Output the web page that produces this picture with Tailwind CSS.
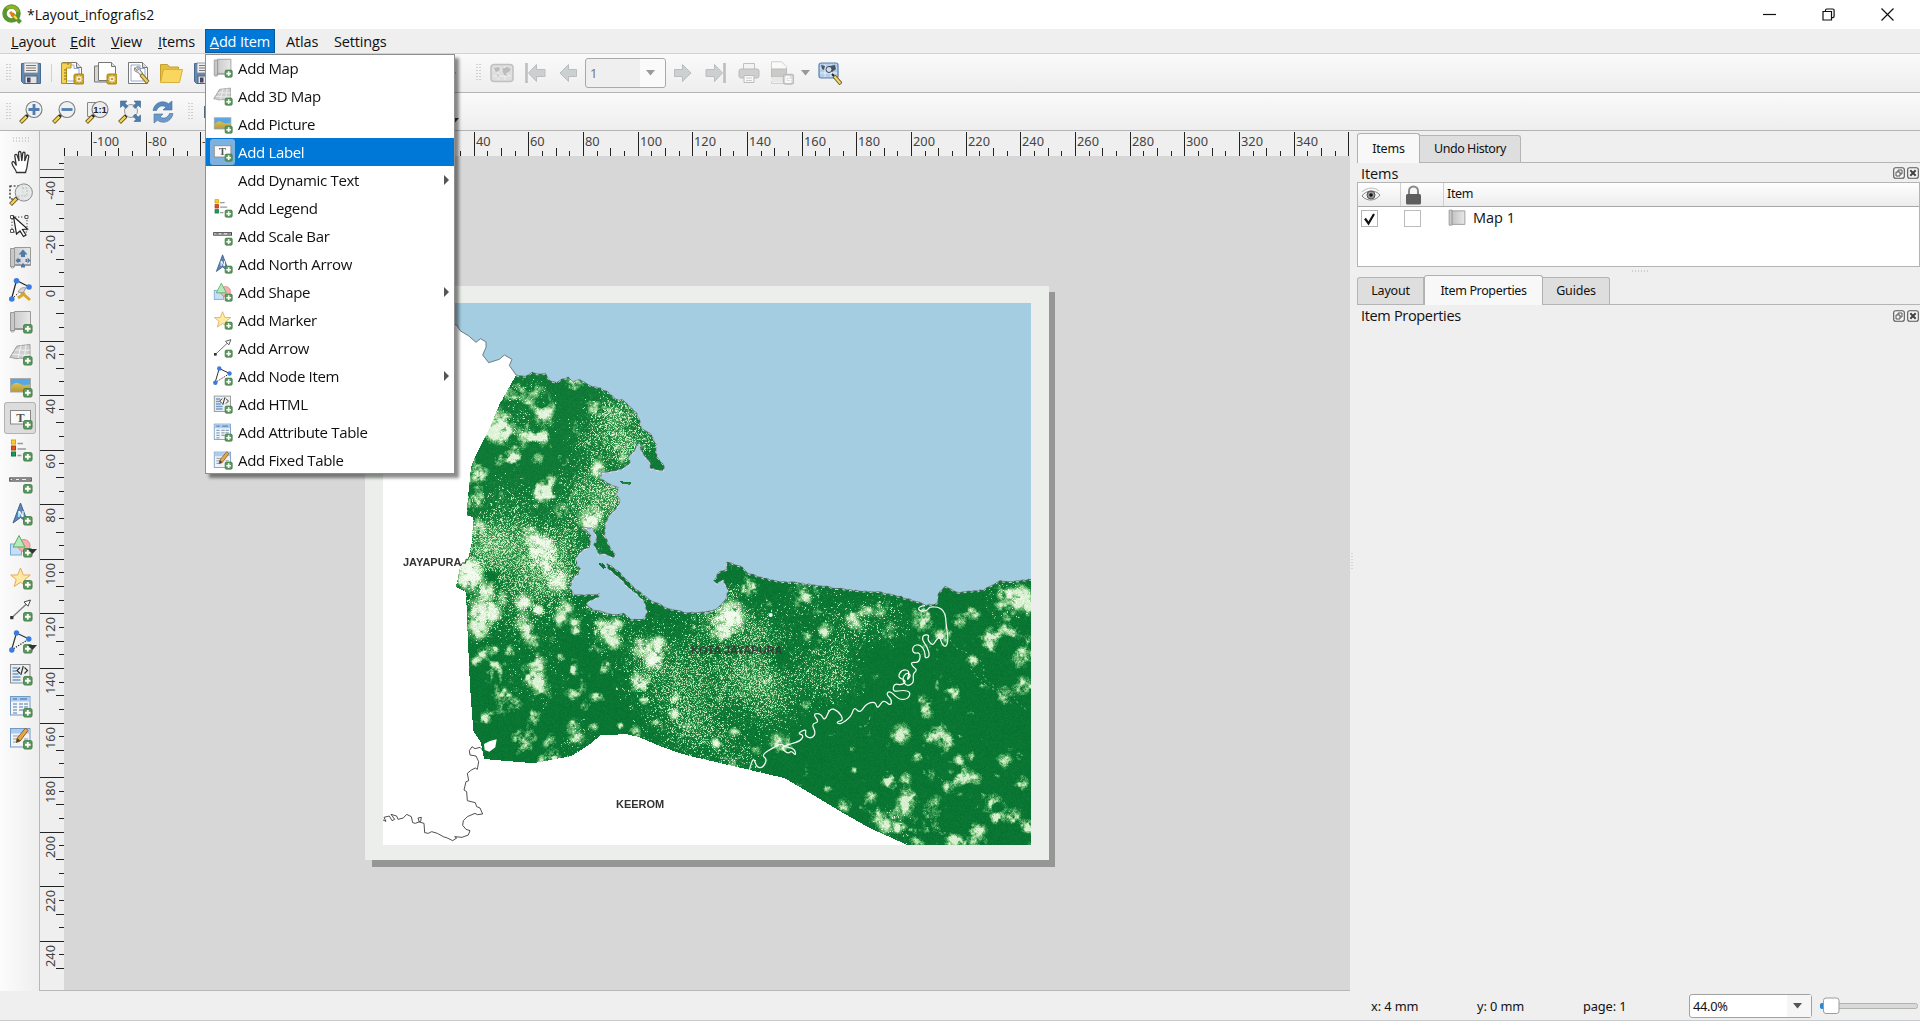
<!DOCTYPE html>
<html lang="en">
<head>
<meta charset="utf-8">
<title>Layout_infografis2</title>
<script src="https://cdn.jsdelivr.net/npm/@tailwindcss/browser@4"></script>
</head>
<body class="w-[1920px] h-[1021px] overflow-hidden bg-[#efefef] font-['Open_Sans',sans-serif] text-[15px] text-[#111] leading-none flex flex-col relative">

<svg class="absolute w-0 h-0">
  <defs>
    <linearGradient id="roll" x1="0" x2="1" y1="0" y2="0"><stop offset="0" stop-color="#c4c4c4"/><stop offset="1" stop-color="#e8e8e8"/></linearGradient>
    <linearGradient id="sand" x1="0" x2="0" y1="0" y2="1"><stop offset="0" stop-color="#dcc05a"/><stop offset="1" stop-color="#b99b35"/></linearGradient>
    <g id="plus"><rect x="14.500" y="14.500" width="8.600" height="8.600" rx="1.600" fill="#5b965c" stroke="#3f7a45" stroke-width=".8"/><path d="M18.800 16v5.600M16 18.800h5.600" stroke="#fff" stroke-width="1.900"/></g>
    <g id="sheet"><path d="M1.500 2.500h4v18h-4zM5.500 1.500h16v18h-16z" fill="url(#roll)" stroke="#999" stroke-width="1"/><path d="M1.500 20.500c0 2 4 2 4 0v-2H21" fill="none" stroke="#999"/></g>
    <g id="star-new"><rect x="14" y="13" width="10" height="10" rx="1.500" fill="#c9a227" stroke="#a98613"/><path d="M19 14.500v7M15.500 18h7M16.500 15.500l5 5M21.500 15.500l-5 5" stroke="#fff" stroke-width="1.100"/><circle cx="19" cy="18" r="1.300" fill="#c9a227"/></g>
    <g id="page"><path d="M2.500 1.500h14l5 5v16h-19z" fill="#fff" stroke="#777"/><path d="M16.500 1.500v5h5" fill="#ddd" stroke="#777"/><path d="M5 4h9v3.500h5V20H5z" fill="none" stroke="#8c9fca" stroke-width=".9"/></g>
    <g id="lens"><path d="M1.500 22.500l6.500-6.500" stroke="#6e5a15" stroke-width="4"/><path d="M2 22l5.500-5.500" stroke="#f0d45c" stroke-width="2.400"/><path d="M7.500 16.500l3-3" stroke="#222" stroke-width="2.800"/></g>
  </defs>
  <symbol id="save" viewBox="0 0 24 24"><path d="M2.500 2.500h19v20H4.500l-2-2z" fill="#6089b5" stroke="#456a94"/><rect x="5" y="2" width="14" height="10" fill="#eee" stroke="#888" stroke-width=".8"/><path d="M7 4.500h10M7 7h10M7 9.500h10" stroke="#777" stroke-width="1.200"/><rect x="6" y="15" width="12" height="7.500" fill="#e4e4e4" stroke="#567"/><rect x="8" y="16.500" width="3.500" height="5" fill="#446"/></symbol>
  <symbol id="new-layout" viewBox="0 0 24 24"><use href="#page"/><path d="M1.500 2v20.500h5V7H11V2z" fill="#f2d354" stroke="#b48f18"/><path d="M4 9h2.500M4 12h2.500M4 15h2.500M4 18h2.500M8 2v2" stroke="#8a6c10"/><use href="#star-new"/></symbol>
  <symbol id="dup" viewBox="0 0 24 24"><path d="M1.500 5v16h15V5z" fill="#d5d5d5" stroke="#777"/><path d="M5.500 1.500h13l4 4v14h-17z" fill="#fff" stroke="#777"/><path d="M18.500 1.500v4h4" fill="#ddd" stroke="#777"/><use href="#star-new"/></symbol>
  <symbol id="manager" viewBox="0 0 24 24"><use href="#page"/><path d="M9 6.500c-1.500 2 0 4.500 2.500 4.500l3 3 2-2-2.500-3c.5-2.500-2-4-3.500-3l2 2-1.500 1.700z" fill="#e8e8e8" stroke="#666" stroke-width=".9"/><path d="M15 13.500l7 8" stroke="#7c6a22" stroke-width="4.200"/><path d="M15.500 14l6 7" stroke="#e8cf62" stroke-width="2.500"/></symbol>
  <symbol id="folder" viewBox="0 0 24 24"><path d="M1.500 21V3.500h7l2 2.500h9v3" fill="#e3bf45" stroke="#c7a02c"/><path d="M1.500 21.500L4.500 8.500h19l-3 13z" fill="#f9d75e" stroke="#d7b13a"/></symbol>
  <symbol id="zin" viewBox="0 0 24 24"><use href="#lens"/><circle cx="15" cy="9.500" r="8" fill="#eef0f2" stroke="#7a7a7a" stroke-width="1.100"/><path d="M15 4v11M9.500 9.500h11" stroke="#4f7db0" stroke-width="2.800"/></symbol>
  <symbol id="zout" viewBox="0 0 24 24"><use href="#lens"/><circle cx="15" cy="9.500" r="8" fill="#eef0f2" stroke="#7a7a7a" stroke-width="1.100"/><path d="M9.500 9.500h11" stroke="#4f7db0" stroke-width="2.800"/></symbol>
  <symbol id="z11" viewBox="0 0 24 24"><path d="M2.500 2.500h10v14h-10z" fill="#eee" stroke="#888"/><use href="#lens"/><circle cx="15" cy="9.500" r="8" fill="#ececec" stroke="#7a7a7a" stroke-width="1.100"/><text x="15" y="13" text-anchor="middle" font-family="Liberation Sans" font-weight="bold" font-size="9.500" fill="#222">1:1</text></symbol>
  <symbol id="zfull" viewBox="0 0 24 24"><use href="#lens"/><circle cx="13" cy="11" r="6.500" fill="#eee" stroke="#999"/><g fill="#4d7cb0" stroke="#3a628f" stroke-width=".6"><path d="M2.500 1h6.500L7 3.200l3 3-2.200 2.200-3-3L2.500 7.500zM22.500 1H16l2 2.200-3 3 2.200 2.200 3-3 2.300 2.100zM22.500 21.500H16l2-2.200-3-3 2.200-2.200 3 3 2.300-2.100z"/></g></symbol>
  <symbol id="refresh" viewBox="0 0 24 24"><path d="M2 10.500C3 4 9 0 15.500 2.500l2 1.200L21 1v9h-9l3-3C11 4.500 7 6.500 5.500 10.500z" fill="#5b89bd" stroke="#456f9f" stroke-width=".6"/><path d="M22 13.500C21 20 15 24 8.500 21.500l-2-1.200L3 23v-9h9l-3 3c4 2.500 8 .5 9.500-3.500z" fill="#6d9acb" stroke="#456f9f" stroke-width=".6"/></symbol>
  <symbol id="atlas" viewBox="0 0 24 24"><rect x="1" y="3.500" width="22" height="17" rx="3" fill="#dedede" stroke="#c0c0c0" stroke-width="1.500"/><path d="M3 9h18M3 15h18M8 5v14M15 5v14" stroke="#f5f5f5" stroke-width=".8"/><path d="M4 7l5-1 1 3-3 2-2-1zM12 8l5-2 4 2-2 3-3 1 1 3-3-1zM7 13l2 1-1 3z" fill="#bcbcbc"/></symbol>
  <symbol id="first" viewBox="0 0 24 24"><path d="M3.500 2v20" stroke="#bcbfbf" stroke-width="2.600"/><path d="M5.500 12l8-8.500V8.500H22v7h-8.500v5z" fill="#cdd0d0" stroke="#bbbebe"/></symbol>
  <symbol id="prev" viewBox="0 0 24 24"><path d="M4 12l8.500-8.500V8.500H20.500v7h-8v5z" fill="#cdd0d0" stroke="#bbbebe"/></symbol>
  <symbol id="next" viewBox="0 0 24 24"><path d="M20 12l-8.500-8.500V8.500H3.500v7h8v5z" fill="#cdd0d0" stroke="#bbbebe"/></symbol>
  <symbol id="last" viewBox="0 0 24 24"><path d="M20.500 2v20" stroke="#bcbfbf" stroke-width="2.600"/><path d="M18.500 12l-8-8.500V8.500H2v7h8.500v5z" fill="#cdd0d0" stroke="#bbbebe"/></symbol>
  <symbol id="print" viewBox="0 0 24 24"><path d="M6.500 2.500h11V9h-11z" fill="#f3f3f3" stroke="#c0c0c0"/><rect x="2" y="8" width="20" height="9" rx="2" fill="#cfcfcf" stroke="#bababa"/><path d="M7 14.500h10v7H7z" fill="#f8f8f8" stroke="#bbb"/><path d="M9 17h6M9 19.500h6" stroke="#ccc"/></symbol>
  <symbol id="export" viewBox="0 0 24 24"><path d="M1.500 8V.800h10l5 5V8" fill="#fafafa" stroke="#cfcfcf"/><path d="M1.500 20v2.500h12" fill="none" stroke="#cfcfcf"/><rect x="1.500" y="8" width="15" height="8" fill="#c9cbc8" stroke="#bcbcbc"/><rect x="1.500" y="16" width="15" height="5" fill="#e8e8e8"/><rect x="13.500" y="13.500" width="10" height="9.500" rx="2" fill="#ddd" stroke="#bcbcbc" stroke-width="1.400"/><path d="M16 16v5h4.500v-1.500M16 16h4M17.500 18.300h4" stroke="#fff" stroke-width="1.300" fill="none"/></symbol>
  <symbol id="atlas-set" viewBox="0 0 24 24"><rect x="1" y="2" width="19" height="15" rx="2" fill="#b4cdea" stroke="#5a80ae" stroke-width="1.200"/><path d="M2 7h17M2 12h17M7 3v13M13 3v13" stroke="#eef4fb" stroke-width=".9"/><path d="M3 4l4 1-1 4-2-1zM11 5l6-1 1 4-4 3-3-2z" fill="#4a5563"/><circle cx="11" cy="8.500" r="3" fill="#cfe0f2" stroke="#445"/><path d="M14 13l2 2" stroke="#222" stroke-width="2"/><path d="M16 15l7 8" stroke="#6e5a15" stroke-width="4"/><path d="M16.500 15.500l6 7" stroke="#ecd878" stroke-width="2.200"/></symbol>

  <symbol id="hand" viewBox="0 0 24 24"><path d="M7.500 22.500c-.5-3-4-6-4.500-9-.3-2 1.500-2.500 2.500-1l1.800 3L5.800 6c-.3-2 2-2.300 2.500-.5L10 11 9.500 3c0-2 2.300-2 2.500 0l.8 8 .9-7.500c.2-1.800 2.400-1.600 2.300.2L15.700 11l1.800-5c.6-1.700 2.600-1 2.200.8-.8 4-1.200 7-1.700 10.200-.3 2-1 3.500-1.500 5.500z" fill="#fff" stroke="#333" stroke-width="1.300"/></symbol>
  <symbol id="zoom" viewBox="0 0 24 24"><rect x="1" y="4" width="13" height="13" fill="none" stroke="#111" stroke-width="1.200" stroke-dasharray="2 1.600"/><use href="#lens"/><circle cx="14.800" cy="10.500" r="8.600" fill="#e4e6e6" fill-opacity=".93" stroke="#8a8a8a"/><path d="M13 6h5v8h-6" fill="none" stroke="#bbb" stroke-dasharray="2 1.500"/></symbol>
  <symbol id="select" viewBox="0 0 24 24"><rect x="3" y="3" width="15" height="15" fill="none" stroke="#444" stroke-dasharray="1.300 1.700"/><path d="M1.500 1.500h3v3h-3zM16 1.500h3v3h-3zM1.500 15.500h3v3h-3z" fill="#fff" stroke="#555"/><path d="M4.500 2.500L18.500 15l-5 .5 3.500 5.500-2.500 1.500-3.500-5.500-3.500 3z" fill="#fff" stroke="#222" stroke-width="1.200"/></symbol>
  <symbol id="movec" viewBox="0 0 24 24"><use href="#sheet"/><g fill="#4d7aa8"><path d="M14 3.500l4.500 5H16V11h-4V8.500H9.500zM12 19h4v2.500h-4zM6.500 14.500l3-3v6zM21.500 14.500l-3-3v6zM9 13h2.500v3H9zM16.500 13H19v3h-2.500zM13 17.500h2V20h-2z"/></g></symbol>
  <symbol id="nodes-edit" viewBox="0 0 24 24"><path d="M7.500 2.500L2.500 21M7.500 2.500L20.500 9" stroke="#222" stroke-width="1.200"/><path d="M2.500 21l7-6" stroke="#222" stroke-dasharray="1.500 1.500"/><path d="M9 20l7-5M12 14l9 8" stroke="#d8a72a" stroke-width="3"/><path d="M9 14c2-4 5-5 8-4l-3 5z" fill="#d4d4d4" stroke="#888" stroke-width=".8"/><g fill="#3b7be0"><circle cx="7.500" cy="2.800" r="2.800"/><circle cx="20" cy="9" r="2.800"/><circle cx="2.800" cy="21" r="2.800"/></g></symbol>

  <symbol id="map" viewBox="0 0 24 24"><use href="#sheet"/><use href="#plus"/></symbol>
  <symbol id="map0" viewBox="0 0 24 24"><path d="M1.500 1.500h4v20h-4z" fill="#ccc" stroke="#999" stroke-width="1.200"/><path d="M5.500 2.500h17v18h-17z" fill="url(#roll)" stroke="#999" stroke-width="1.200"/></symbol>
  <symbol id="map3d" viewBox="0 0 24 24"><path d="M8 4l13-1.500V17c-4 2-8-2-12-.5-3 1-5-1.500-8-1z" fill="#cfcfcf" stroke="#a0a0a0"/><path d="M5 8.500c5-2 10 1 16-.5M3 12.500c6-1 10 2 18 0M12 3.500L9 16M17 3l-2 14" stroke="#f2f2f2" fill="none"/><path d="M8 4L1 15.500" stroke="#aaa"/><use href="#plus"/></symbol>
  <symbol id="pic" viewBox="0 0 24 24"><rect x="1.500" y="4.500" width="20" height="13.500" fill="#55a8e4" stroke="#aaa"/><path d="M2 12c4-4 6-4 9-2 3 1.500 6 1 10 .5v7H2z" fill="url(#sand)"/><use href="#plus"/></symbol>
  <symbol id="label" viewBox="0 0 24 24"><rect x="1.500" y="4.500" width="20" height="13.500" fill="#fafafa" stroke="#888"/><text x="11.500" y="15.500" text-anchor="middle" font-family="Liberation Serif" font-weight="bold" font-size="12.500" fill="#555">T</text><use href="#plus"/></symbol>
  <symbol id="legend" viewBox="0 0 24 24"><rect x="2.500" y="2" width="4" height="4" fill="#fbd02c" stroke="#d9a400"/><rect x="2.500" y="8" width="4" height="4" fill="#e0521c" stroke="#b8380c"/><rect x="2.500" y="14" width="4" height="4" fill="#16a05a" stroke="#0c7a40"/><path d="M8.500 5.500H14M8.500 11h8.500M8.500 17.500h4" stroke="#999" stroke-width="1.500"/><use href="#plus"/></symbol>
  <symbol id="scale" viewBox="0 0 24 24"><rect x=".8" y="8" width="21.400" height="3" fill="#eee" stroke="#444" stroke-width="1.200"/><path d="M3 9.500h4M10 9.500h3M17 9.500h4" stroke="#888" stroke-width="2"/><use href="#plus"/></symbol>
  <symbol id="north" viewBox="0 0 24 24"><path d="M11.500 1L4 21l7.500-5.500L19 21z" fill="#5f87b3" stroke="#3c638f"/><text x="11.800" y="14.500" text-anchor="middle" font-family="Liberation Sans" font-weight="bold" font-size="8.500" fill="#fff">N</text><use href="#plus"/></symbol>
  <symbol id="shape" viewBox="0 0 24 24"><rect x="1.500" y="10" width="11" height="11" fill="#c3e0f6" stroke="#7ba9d6"/><circle cx="15" cy="11.500" r="6" fill="#f6b0ad" stroke="#e08886"/><path d="M10 1.500l6 11.500H4z" fill="#b4ebb9" stroke="#57ab66"/><use href="#plus"/></symbol>
  <symbol id="marker" viewBox="0 0 24 24"><path d="M11.500 2l2.800 7h7l-5.500 4.500 2 7-6.300-4.200-6.300 4.200 2-7L1.700 9h7z" fill="#fdeaa4" stroke="#e8a85e"/><use href="#plus"/></symbol>
  <symbol id="arrow" viewBox="0 0 24 24"><path d="M3 19.500L18.500 5" stroke="#777" stroke-width="1.200"/><rect x="1.200" y="18" width="3.200" height="3.200" fill="#333"/><path d="M21.500 2l-6.500 2 4 4.200z" fill="#fff" stroke="#444"/><use href="#plus"/></symbol>
  <symbol id="node" viewBox="0 0 24 24"><path d="M7.500 3L2.500 20M7.500 3l12.500 6" stroke="#333" stroke-width="1.200"/><path d="M2.500 20L20 9" stroke="#222" stroke-width="1.200" stroke-dasharray="1.300 1.300"/><g fill="#3b7be0"><circle cx="7.500" cy="3" r="2.700"/><circle cx="19.800" cy="9" r="2.700"/><circle cx="2.800" cy="20" r="2.700"/></g><use href="#plus"/></symbol>
  <symbol id="html" viewBox="0 0 24 24"><rect x="1.500" y="2.500" width="19.500" height="18.500" fill="#eceef0" stroke="#8b8b8b"/><path d="M3.500 6h5M3.500 9h4M3.500 12h6M3.500 15h8M3.500 18h8" stroke="#6f9bcc" stroke-width="1.700"/><path d="M11 5.500L8 8.500l3 3M15.500 5.500l3 3-3 3M14.300 4l-2.500 9" fill="none" stroke="#333" stroke-width="1.200"/><use href="#plus"/></symbol>
  <symbol id="attr" viewBox="0 0 24 24"><rect x="1.500" y="2.500" width="19.500" height="18.500" fill="#f4f6f9" stroke="#7099c6"/><rect x="2" y="3" width="18.500" height="4.500" fill="#a9ccef"/><path d="M4 10h4M10 10h4M15 10h4M4 13h4M10 13h4M15 13h4M4 16h4M10 16h4M4 19h4" stroke="#8aa2bd" stroke-width="1.300"/><path d="M4 5h4M11 5h7" stroke="#5b88bd" stroke-width="1.500"/><use href="#plus"/></symbol>
  <symbol id="fixed" viewBox="0 0 24 24"><rect x="1.500" y="2.500" width="19.500" height="18.500" fill="#f0f3f7" stroke="#7099c6"/><rect x="2" y="3" width="18.500" height="4.500" fill="#a9ccef"/><path d="M4 10h6M4 13h5M4 16h4M15 13h4" stroke="#999" stroke-width="1.200"/><path d="M16.500 2L8 12.500l-.6 4 3.800-1.500L19 4.500z" fill="#e8a64c" stroke="#8c6128"/><path d="M8.500 12l-1.100 4.500 3.800-1.700z" fill="#444"/><use href="#plus"/></symbol>
  <symbol id="float" viewBox="0 0 12 12"><rect x=".7" y=".7" width="10.600" height="10.600" rx="2" fill="#f6f6f6" stroke="#555" stroke-width="1.100"/><path d="M5 5V3h4v4H7M3 5h4v4H3z" fill="none" stroke="#555"/></symbol>
  <symbol id="xbox" viewBox="0 0 12 12"><rect x=".7" y=".7" width="10.600" height="10.600" rx="2" fill="#f6f6f6" stroke="#555" stroke-width="1.100"/><path d="M3.300 3.300l5.400 5.400M8.700 3.300L3.300 8.700" stroke="#444" stroke-width="2"/></symbol>
</svg>

<!-- title bar -->
<header class="h-[29px] shrink-0 bg-white flex items-center pl-[2px]">
  <svg class="w-5 h-5 mr-[5px] -mt-px" viewBox="0 0 20 20"><circle cx="9.500" cy="9.500" r="7" fill="none" stroke="#589632" stroke-width="4.500"/><path d="M4.500 4.500A7 7 0 0 1 16 8" stroke="#93b023" stroke-width="3" fill="none"/><path d="M10 10l8.500 8.500" stroke="#589632" stroke-width="4"/><path d="M8 8l6 6" stroke="#ee7913" stroke-width="3"/><path d="M12 12l3 3" stroke="#f0e64a" stroke-width="2"/></svg>
  <span class="text-[14px] tracking-[0px] grow">*Layout_infografis2</span>
  <div class="flex items-center gap-[46px] pr-[26px] -mt-px">
    <svg class="w-[13px] h-[13px]" viewBox="0 0 13 13"><path d="M0 6.500h13" stroke="#111" stroke-width="1.200"/></svg>
    <svg class="w-[13px] h-[13px]" viewBox="0 0 13 13"><path d="M1 3.500h8.500V12H1zM3.500 3.500V2.300Q3.500 1 4.800 1h6q1.300 0 1.300 1.300v6q0 1.300-1.300 1.300H9.500" fill="none" stroke="#111" stroke-width="1.200"/></svg>
    <svg class="w-[13px] h-[13px]" viewBox="0 0 13 13"><path d="M.5 .5l12 12M12.500 .5l-12 12" stroke="#111" stroke-width="1.200"/></svg>
  </div>
</header>

<!-- menu bar -->
<nav class="h-[24px] shrink-0 flex items-stretch text-[14.500px] tracking-[-0.150px]">
  <span class="pl-[11px] pt-[2px] w-[70px] flex items-center"><u>L</u>ayout</span>
  <span class="w-[41px] pt-[2px] flex items-center"><u>E</u>dit</span>
  <span class="w-[47px] pt-[2px] flex items-center"><u>V</u>iew</span>
  <span class="w-[47px] pt-[2px] flex items-center"><u>I</u>tems</span>
  <span class="w-[70px] pt-[2px] bg-[#0078d7] border border-[#0a5a9c] text-white flex items-center justify-center"><u>A</u>dd&nbsp;Item</span>
  <span class="ml-[11px] pt-[2px] w-[48px] flex items-center">Atlas</span>
  <span class="pt-[2px] flex items-center">Settings</span>
</nav>

<!-- layout and atlas toolbars -->
<div class="h-[40px] shrink-0 border-t border-[#d2d2d2] border-b border-b-[#b4b4b4] bg-linear-to-b from-[#fafafa] to-[#eeeeee] flex items-center">
  <svg class="w-[5px] h-[18px] ml-[6px] mr-[8px]"><path d="M1 0v18M4 0v18" stroke="#aaa" stroke-dasharray="1 2"/></svg>
  <svg class="w-6 h-6"><use href="#save"/></svg>
  <div class="w-px h-[18px] bg-[#d0d0d0] mx-[8px]"></div>
  <div class="flex gap-[9px]">
    <svg class="w-6 h-6"><use href="#new-layout"/></svg>
    <svg class="w-6 h-6"><use href="#dup"/></svg>
    <svg class="w-6 h-6"><use href="#manager"/></svg>
    <svg class="w-6 h-6"><use href="#folder"/></svg>
    <svg class="w-6 h-6"><use href="#save"/></svg>
  </div>
  <svg class="w-6 h-6 ml-[220px] mr-[16px]"><use href="#next"/></svg>
  <svg class="w-[5px] h-[18px] mr-[9px]"><path d="M1 0v18M4 0v18" stroke="#aaa" stroke-dasharray="1 2"/></svg>
  <div class="flex gap-[9px]">
    <svg class="w-6 h-6"><use href="#atlas"/></svg>
    <svg class="w-6 h-6"><use href="#first"/></svg>
    <svg class="w-6 h-6"><use href="#prev"/></svg>
  </div>
  <div class="ml-[5px] mr-[5px] w-[81px] h-[30px] border border-[#a9aaa7] rounded-[3px] bg-[#efefef] flex items-center text-[13px] text-[#777] pl-[4px]">
    <span class="grow pt-px font-['Noto_Sans',sans-serif]">1</span>
    <span class="w-[25px] h-full bg-[#fafafa] flex items-center justify-center rounded-r-[3px]"><svg class="w-[9px] h-[6px] -ml-[4px]"><path d="M0 0h9L4.500 5.500z" fill="#9a9a9a"/></svg></span>
  </div>
  <div class="flex gap-[9px] items-center">
    <svg class="w-6 h-6"><use href="#next"/></svg>
    <svg class="w-6 h-6"><use href="#last"/></svg>
    <svg class="w-6 h-6"><use href="#print"/></svg>
    <svg class="w-6 h-6"><use href="#export"/></svg>
  </div>
  <svg class="w-[9px] h-[6px] ml-[7px] mr-[8px]"><path d="M0 0h9L4.500 5.500z" fill="#999"/></svg>
  <svg class="w-6 h-6"><use href="#atlas-set"/></svg>
</div>

<!-- view toolbar -->
<div class="h-[38px] shrink-0 border-b border-[#b4b4b4] bg-linear-to-b from-[#fafafa] to-[#eeeeee] flex items-center">
  <svg class="w-[5px] h-[18px] ml-[6px] mr-[8px]"><path d="M1 0v18M4 0v18" stroke="#aaa" stroke-dasharray="1 2"/></svg>
  <div class="flex gap-[9px]">
    <svg class="w-6 h-6"><use href="#zin"/></svg>
    <svg class="w-6 h-6"><use href="#zout"/></svg>
    <svg class="w-6 h-6"><use href="#z11"/></svg>
    <svg class="w-6 h-6"><use href="#zfull"/></svg>
    <svg class="w-6 h-6"><use href="#refresh"/></svg>
  </div>
  <svg class="w-[5px] h-[18px] ml-[13px] mr-[11px]"><path d="M1 0v18M4 0v18" stroke="#aaa" stroke-dasharray="1 2"/></svg>
  <svg class="w-3 h-5"><rect x=".5" y="4.500" width="11" height="11" fill="#9ab" stroke="#567"/></svg>
  <svg class="w-[8px] h-[5px] ml-[235px] mt-[18px]"><path d="M0 0h8L4 4.500z" fill="#333"/></svg>
</div>

<main class="flex h-[860px] shrink-0">
  <!-- toolbox -->
  <aside class="w-[40px] h-[860px] border-r-[1.500px] border-[#b8b8b8] bg-linear-to-r from-[#fcfcfc] to-[#eeeeee] flex flex-col items-center pt-[6px] shrink-0">
    <svg class="w-[17px] h-[5px] ml-[3px]"><path d="M0 1h17M0 4h17" stroke="#aaa" stroke-dasharray="1 2"/></svg>
    <div id="toolbox" class="flex flex-col pt-[4px]"></div>
  </aside>

  <!-- rulers and canvas -->
  <section class="w-[1310px] h-[860px] shrink-0 grid grid-cols-[24px_1286px] grid-rows-[25px_834px] border-b border-[#b8b8b8]">
    <svg id="hruler" class="col-span-2 w-[1310px] h-[25px]" shape-rendering="crispEdges"></svg>
    <svg id="vruler" class="w-[24px] h-[834px]" shape-rendering="crispEdges"></svg>
    <div class="bg-[#d7d7d7] relative overflow-hidden">
      <div class="absolute left-[308px] top-[136px] w-[683px] h-[575px] bg-[#969696]"></div>
      <div class="absolute left-[301px] top-[130px] w-[684px] h-[574px] bg-[#ebeeeb]">
        <canvas id="map-view" width="648" height="542" class="absolute left-[18px] top-[17px] w-[648px] h-[542px]"></canvas>
        <span class="absolute left-[38px] top-[271px] text-[11px] font-bold font-['Liberation_Sans',sans-serif] text-[#333] tracking-[0px]">JAYAPURA</span>
        <span class="absolute left-[326px] top-[359px] text-[11px] font-bold font-['Liberation_Sans',sans-serif] text-[#333]/90 tracking-[0px] whitespace-nowrap">KOTA JAYAPURA</span>
        <span class="absolute left-[251px] top-[513px] text-[11px] font-bold font-['Liberation_Sans',sans-serif] text-[#333]">KEEROM</span>
      </div>
    </div>
  </section>

  <!-- docks -->
  <aside class="w-[570px] h-[860px] pl-[7px] flex flex-col">
    <div class="mt-px h-[31px] flex items-end border-b border-[#b4b4b4] font-['Noto_Sans',sans-serif] text-[12.500px] tracking-[-0.200px]">
      <span class="w-[63px] h-[30px] pt-px -mb-px rounded-t-[3px] border border-b-0 border-[#b0b0b0] bg-[#f8f8f8] flex items-center justify-center">Items</span>
      <span class="w-[101px] h-[27px] pt-px tracking-[-0.450px] border border-l-0 border-b-0 border-[#b4b4b4] rounded-tr-[3px] bg-[#dedede] flex items-center justify-center">Undo History</span>
    </div>
    <div class="h-[19px] flex items-center pl-[4px] pr-px gap-[2px]"><span class="grow pt-[3px] text-[14.500px] tracking-[-0.100px]">Items</span><svg class="w-[12px] h-[12px]"><use href="#float"/></svg><svg class="w-[12px] h-[12px]"><use href="#xbox"/></svg></div>
    <div class="h-[85px] border border-[#b4b4b4] bg-white flex flex-col">
      <div class="h-[24px] shrink-0 border-b border-[#a8a8a8] bg-linear-to-b from-white to-[#ececec] flex text-[12.500px] font-['Noto_Sans',sans-serif]">
        <span class="w-[43px] border-r border-[#cfcfcf] flex items-center pl-[3px]"><svg class="w-[20px] h-[16px]" viewBox="0 0 20 16"><path d="M1 9c4-6 13-7 18-1-4 6-13 7-18 1z" fill="#f4f4f4" stroke="#888"/><circle cx="10" cy="8" r="4" fill="#999" stroke="#555"/><circle cx="10" cy="8" r="1.800" fill="#111"/><path d="M1 5c5-5 13-5 17-1" fill="none" stroke="#bbb"/></svg></span>
        <span class="w-[43px] border-r border-[#cfcfcf] flex items-center pl-[4px]"><svg class="w-[17px] h-[20px]" viewBox="0 0 17 20"><path d="M4 10V6a4.500 4.500 0 0 1 9 0v4" fill="none" stroke="#888" stroke-width="2"/><rect x="1" y="9" width="15" height="10.500" rx="1.500" fill="#5e5e5e"/></svg></span>
        <span class="flex items-center pl-[3px] tracking-[-0.350px]">Item</span>
      </div>
      <div class="h-[24px] flex items-center pl-[3px] -mt-px">
        <svg class="w-[17px] h-[17px]"><rect x=".5" y=".5" width="16" height="16" fill="#fff" stroke="#b4b4b4"/><path d="M4 8.500l3.500 5L13 4" fill="none" stroke="#111" stroke-width="2.200"/></svg>
        <svg class="w-[17px] h-[17px] ml-[26px]"><rect x=".5" y=".5" width="16" height="16" fill="#fff" stroke="#bbb"/></svg>
        <svg class="w-[18px] h-[18px] ml-[27px]"><use href="#map0"/></svg>
        <span class="ml-[7px] text-[14.500px]">Map 1</span>
      </div>
    </div>
    <svg class="w-[17px] h-[2px] ml-[275px] mt-[3px]"><path d="M0 1h17" stroke="#aaa" stroke-dasharray="1 2"/></svg>
    <div class="mt-[2px] h-[31px] flex items-end border-b border-[#b4b4b4] font-['Noto_Sans',sans-serif] text-[12.500px] tracking-[-0.200px]">
      <span class="w-[67px] h-[27px] pt-px border border-b-0 border-[#b4b4b4] rounded-tl-[3px] bg-[#dedede] flex items-center justify-center">Layout</span>
      <span class="w-[119px] h-[30px] pt-px -mb-px rounded-t-[3px] border border-b-0 border-[#b0b0b0] bg-[#f8f8f8] flex items-center justify-center tracking-[-0.350px]">Item Properties</span>
      <span class="w-[67px] h-[27px] pt-px border border-l-0 border-b-0 border-[#b4b4b4] rounded-tr-[3px] bg-[#dedede] flex items-center justify-center">Guides</span>
    </div>
    <div class="h-[21px] flex items-center pl-[4px] pr-px gap-[2px]"><span class="grow pt-[2px] text-[14.500px] tracking-[-0.330px]">Item Properties</span><svg class="w-[12px] h-[12px]"><use href="#float"/></svg><svg class="w-[12px] h-[12px]"><use href="#xbox"/></svg></div>
    <svg class="w-[2px] h-[17px] -ml-[6px] mt-[227px]"><path d="M1 0v17" stroke="#bbb" stroke-dasharray="1 2"/></svg>
  </aside>
</main>

<!-- status bar -->
<footer class="h-[30px] shrink-0 border-b border-[#c8ccce] flex items-center font-['Noto_Sans',sans-serif] text-[12.800px] tracking-[-0.100px] pl-[1371px] pt-px">
  <span class="w-[106px] pt-px">x: 4 mm</span>
  <span class="w-[106px] pt-px">y: 0 mm</span>
  <span class="w-[106px] pt-px">page: 1</span>
  <div class="w-[123px] h-[24px] border border-[#a0a3a0] rounded-[3px] bg-white flex items-center pl-[3px]"><span class="grow pt-px tracking-[-0.300px]">44.0%</span><span class="w-[24px] h-full bg-[#f6f6f6] flex items-center justify-center"><svg class="w-[9px] h-[6px] -ml-[3px]"><path d="M0 0h9L4.500 5.500z" fill="#555"/></svg></span></div>
  <svg class="w-[100px] h-[18px] ml-[8px]"><rect x=".5" y="6.500" width="97" height="5" rx="2" fill="#d8dad8" stroke="#b0b3b0"/><rect x="0" y="6" width="6" height="6" rx="2" fill="#2d86d0"/><rect x="3.500" y="1" width="15.500" height="15.500" rx="2.500" fill="#fff" stroke="#9a9d9a"/></svg>
</footer>

<!-- Add Item menu -->
<div id="add-menu" class="absolute left-[205px] top-[54px] w-[250px] h-[420px] bg-white outline outline-[#8f8f8f] -outline-offset-1 shadow-[4px_4px_3px_rgba(0,0,0,0.45)] flex flex-col"></div>

<template id="menu-row">
  <div class="h-[28px] flex items-center pl-[4px] pr-[5px] mx-px">
    <span class="w-[25px] h-[26px] flex items-center justify-center rounded-[3px]"><svg class="w-[20px] h-[20px]"><use/></svg></span>
    <span class="pl-[3px] pt-px grow text-[15px] tracking-[-0.330px] whitespace-nowrap"></span>
    <svg class="w-[5px] h-[10px]"><path d="M0 0l5 5-5 5z" fill="#555"/></svg>
  </div>
</template>

<script>
const NS = 'http://www.w3.org/2000/svg';

// toolbox buttons
for (const id of ['hand','zoom','select','movec','nodes-edit','map','map3d','pic','label','legend','scale','north','shape','marker','arrow','node','html','attr','fixed']) {
  const b = document.createElement('div');
  b.className = 'relative w-[32px] h-[32px] flex items-center justify-center pl-[2px] pb-px rounded-[3px]' + (id === 'label' ? ' bg-[#dcdcdc] outline outline-[#b2b2b2] -outline-offset-1' : '');
  b.innerHTML = `<svg class="w-6 h-6"><use href="#${id}"/></svg>` + (id === 'shape' || id === 'node' ? '<svg class="absolute right-[-1px] bottom-[7px] w-[9px] h-[6px]"><path d="M0 0h9L4.500 5z" fill="#333"/></svg>' : '');
  document.getElementById('toolbox').append(b);
}

// menu entries: label, icon, has submenu
const entries = [['Add Map','map'],['Add 3D Map','map3d'],['Add Picture','pic'],['Add Label','label'],['Add Dynamic Text','',1],['Add Legend','legend'],['Add Scale Bar','scale'],['Add North Arrow','north'],['Add Shape','shape',1],['Add Marker','marker'],['Add Arrow','arrow'],['Add Node Item','node',1],['Add HTML','html'],['Add Attribute Table','attr'],['Add Fixed Table','fixed']];
for (const [text, icon, sub] of entries) {
  const row = document.getElementById('menu-row').content.firstElementChild.cloneNode(true);
  row.querySelector('use').setAttribute('href', '#' + icon);
  row.children[1].textContent = text;
  if (!sub) row.children[2].remove();
  if (!icon) row.querySelector('use').remove();
  if (text === 'Add Label') { row.classList.add('bg-[#0078d7]', 'text-white'); row.children[0].classList.add('bg-[#7fb1de]'); }
  document.getElementById('add-menu').append(row);
}

// rulers
function line(svg, x1, y1, x2, y2, c = '#222') {
  const l = document.createElementNS(NS, 'rect');
  l.setAttribute('x', Math.min(x1, x2)); l.setAttribute('y', Math.min(y1, y2));
  l.setAttribute('width', Math.abs(x2 - x1) || 1); l.setAttribute('height', Math.abs(y2 - y1) || 1);
  l.setAttribute('fill', c); svg.append(l);
}
function label(svg, x, y, s, rot) {
  const t = document.createElementNS(NS, 'text');
  t.setAttribute('font-family', 'Noto Sans'); t.setAttribute('font-size', '12.800'); t.setAttribute('fill', '#444');
  if (rot) { t.setAttribute('transform', `translate(${x} ${y}) rotate(-90)`); t.setAttribute('text-anchor', 'end'); }
  else { t.setAttribute('x', x); t.setAttribute('y', y); }
  t.textContent = s; svg.append(t);
}
const hs = 54.660 / 4, vs = 54.570 / 4, H = document.getElementById('hruler'), V = document.getElementById('vruler');
for (let i = -22; i <= 72; i++) {
  const x = Math.round(364.800 + i * hs - 40 - .5), major = i % 4 === 0;
  if (x < 24) continue;
  line(H, x, major ? 1 : i % 2 ? 20 : 17, x, 25);
  if (major && i * 5 < 360) label(H, x + 2, 15, i * 5);
}
for (let i = -10; i <= 50; i++) {
  const y = Math.round(286.300 + i * vs - 156 - .3), major = i % 4 === 0;
  if (y < 5 || y > 832) continue;
  line(V, major ? 0 : i % 2 ? 19 : 16, y, 24, y);
  if (major) label(V, 14.500, y + 4, i * 5, true);
}
line(V, 0, 13, 24, 13, '#c62828');

// map: outlines are digitised on three tiles at a third of a pixel
const A = [360, 280], B = [360, 560], C = [690, 540];
const at = (t, p) => { const r = []; for (let i = 0; i < p.length; i += 2) r.push([t[0] + p[i] / 3 - 383, t[1] + p[i + 1] / 3 - 303]); return r; };
const west = at(A, [60,69,200,110,290,135,300,152,325,167,348,187,362,176,378,186,378,202,368,225,386,248,418,238,433,225,456,238,448,256,468,285]);
const coast = [
  ...at(A, [468,285,490,290,505,286,515,276,532,282,556,280,566,300,590,310,608,298,625,292,640,305,660,298,690,318,715,322,745,338,770,360,788,358,805,378,830,400,840,430,845,445,870,460,888,495,890,530,912,555,912,572,870,565,868,545,845,515,838,488,825,510,808,530,808,555,770,572,722,577,725,600,750,612,775,625,771,645,782,665,755,700,735,730,735,765,745,795,767,825,758,832,740,822,715,822,703,795,712,775,695,745,665,740,690,765,692,800,670,810,650,830,648,855,660,865,655,885,640,890,630,925]),
  ...at(B, [640,105,700,105,718,100,718,112,690,120,678,132,700,150,725,155,760,165,790,160,815,180,850,178,862,155,850,120,810,85,770,45,740,20,742,10,770,30,800,60,830,90,870,120,920,145,980,158,1050,157]),
  ...at(C, [40,220,80,208,108,180,112,150,100,118,80,130,72,120,90,95,110,90,112,66,150,78,175,100,240,120,330,130,480,150,580,158,650,175,710,196,742,190,745,160,765,138,800,158,880,150,930,122,960,125,1026,119])];
const land = [...coast, ...at(C, [1026,920,655,916,540,865,470,825,285,715,180,690,0,648]),
  ...at(B, [960,580,900,558,835,530,800,523,722,525,690,552,635,588,520,610,372,597,362,545,340,512,330,380,322,200,318,95,288,80]),
  ...at(A, [300,860,325,835,335,790,340,710,322,708,322,670,333,560,345,530,390,440,420,370])];
// [x, y, radius, strength]; negative strength keeps forest dark
const q = (t, l) => l.map(([x, y, r, s]) => [t[0] + x / 3 - 383, t[1] + y / 3 - 303, r / 3, s]);
const clouds = [
  ...q(A, [[415,430,40,1],[385,455,25,.8],[440,335,28,.6],[500,350,26,.5],[545,365,38,.75],[580,385,26,.7],[640,310,26,.9],[500,470,34,.8],[540,470,30,.7],[460,525,20,1],[355,580,28,1],[350,660,22,.8],[545,640,28,1],[575,595,20,.7],[415,540,16,.8],[530,535,18,.7],[700,390,22,.7],[715,565,24,1],[690,715,34,1.1],[430,470,26,.7],[540,410,22,.7],[600,690,24,.6],[350,740,26,.8],[510,760,30,.6],[545,820,45,.8],[320,880,40,1.400],[600,905,40,.7],[580,545,20,.5],[545,365,16,-2],[615,360,32,-1.500],[600,400,16,-1],[522,450,14,-1.200],[455,475,12,-1],[520,495,16,-1],[582,547,12,-1.500],[735,635,18,-1.200],[465,380,18,-.6]]),
  ...q(B, [[365,165,50,.9],[400,150,20,.7],[350,210,30,.6],[380,95,26,.9],[430,120,16,.6],[490,125,26,1],[535,150,13,1.600],[490,195,28,.85],[600,180,20,.9],[645,185,13,1.500],[645,210,12,1.600],[615,145,24,.8],[735,210,30,1.100],[760,245,24,.8],[770,190,20,.7],[365,280,18,.9],[345,305,14,.9],[402,265,14,.8],[445,272,14,.9],[408,318,17,1],[515,245,24,.8],[530,320,28,.8],[535,380,30,.9],[520,350,20,.6],[425,405,24,.9],[465,430,20,.8],[520,470,22,.7],[375,470,17,.9],[730,320,20,.9],[640,325,15,.8],[635,400,22,.7],[660,375,22,.6],[710,410,18,.8],[672,438,14,.7],[645,530,26,.9],[640,490,18,.6],[700,500,16,.7],[560,540,26,.7],[580,590,20,.9],[545,600,18,.8],[490,540,26,.7],[780,495,10,1],[820,510,18,.8],[850,260,42,.7],[880,300,26,.9],[835,360,26,.9],[900,250,20,.9],[850,420,14,.9],[945,410,16,.8],[885,490,14,.8],[940,460,18,.7],[700,270,16,.4],[600,290,14,.5],[505,290,12,-1],[710,315,11,-1.500],[645,372,13,-1.200],[542,415,14,-1.500],[545,525,14,-1],[740,100,20,.3]]),
  ...q(C, [[185,140,20,1],[345,165,17,.9],[120,225,45,.9],[90,280,24,.7],[405,272,22,1],[350,285,16,.8],[525,212,22,.8],[568,212,20,.7],[500,260,20,.5],[600,265,20,.6],[695,242,28,1.100],[755,285,22,.9],[850,222,20,.8],[800,240,18,.8],[965,180,42,.9],[1000,165,28,.8],[1018,198,14,1.600],[905,300,30,.9],[960,285,32,.9],[990,345,30,1],[952,312,24,-2],[845,360,17,1.100],[1000,435,26,.9],[820,450,36,.6],[790,455,18,.7],[940,465,26,.7],[630,580,28,1.100],[705,490,20,.9],[708,520,17,.8],[740,580,24,.8],[770,605,24,.8],[715,590,20,.5],[685,650,12,.9],[805,658,16,.9],[840,648,12,.8],[945,660,24,.7],[490,690,9,1.100],[645,715,18,.9],[590,720,20,.8],[540,770,20,.8],[460,795,20,1],[410,742,14,.8],[650,770,26,.9],[640,805,24,1],[720,700,20,.5],[820,715,28,1],[860,715,16,.8],[832,745,14,-1.600],[835,760,14,.6],[910,790,26,1],[970,825,28,.8],[918,800,12,-2],[995,725,18,.9],[1015,860,20,.9],[920,830,16,.9],[590,850,32,.8],[560,830,20,.6],[630,862,14,1.400],[680,905,20,.9],[790,895,26,1],[850,900,26,.8],[870,870,20,.8],[730,800,30,.6],[770,740,22,.6],[740,860,22,.6],[790,840,36,-1.200],[825,450,22,-1],[265,605,28,.9],[200,630,14,.8],[75,605,14,1],[345,490,16,.8],[480,235,22,.7],[130,575,16,.7]])];
const specks = [
  ...q(A, [[770,440,75,.6],[800,510,45,.65],[690,490,50,.3],[770,390,45,.45],[860,480,25,.4],[690,600,50,.5],[760,640,40,.6],[720,690,60,.6],[640,660,60,.35],[430,750,90,.4],[380,790,60,.4],[500,840,100,.5],[590,850,80,.5],[370,830,60,.4],[330,880,40,.5],[620,760,50,.3],[490,400,90,.14],[440,660,60,.15],[390,885,22,-.8]]),
  ...q(B, [[400,60,90,.25],[560,60,80,.5],[370,170,60,.3],[500,170,80,.22],[740,180,60,.3],[860,280,80,.35],[900,360,80,.32],[1000,300,90,.32],[960,430,90,.22],[1000,510,70,.22],[850,100,30,.4],[660,540,50,.15],[530,350,90,.1]]),
  ...q(C, [[110,220,50,.6],[60,260,60,.35],[180,260,60,.35],[220,310,80,.35],[150,390,80,.42],[170,440,70,.25],[240,440,80,.4],[370,390,70,.35],[440,420,55,.4],[440,340,50,.3],[240,510,60,.3],[10,560,90,.32],[30,450,70,.2],[110,610,60,.2],[350,170,60,.15],[520,230,70,.22],[450,260,60,.2],[600,250,50,.2],[130,150,20,.4],[150,660,60,.2],[270,355,30,-.5],[600,860,60,.15],[960,180,60,.15]])];
const hash = (x, y) => { let n = Math.imul(x, 374761393) + Math.imul(y, 668265263) | 0; n = Math.imul(n ^ n >>> 13, 1274126177); return ((n ^ n >>> 16) >>> 0) / 4294967296; };
const noise = (x, y) => { const i = Math.floor(x), j = Math.floor(y), u = x - i, v = y - j, a = u * u * (3 - 2 * u), b = v * v * (3 - 2 * v);
  return (hash(i, j) * (1 - a) + hash(i + 1, j) * a) * (1 - b) + (hash(i, j + 1) * (1 - a) + hash(i + 1, j + 1) * a) * b; };
const cv = document.getElementById('map-view'), g = cv.getContext('2d');
const poly = (c, pts, close = true) => { c.beginPath(); pts.forEach(([x, y], i) => i ? c.lineTo(x, y) : c.moveTo(x, y)); if (close) c.closePath(); };
const smooth = (c, p) => { c.beginPath(); c.moveTo(...p[0]); for (let i = 1; i < p.length - 1; i++) c.quadraticCurveTo(p[i][0], p[i][1], (p[i][0] + p[i + 1][0]) / 2, (p[i][1] + p[i + 1][1]) / 2); c.lineTo(...p[p.length - 1]); c.stroke(); };
// small wiggles along the shore
const rough = pts => { const r = []; for (let i = 0; i < pts.length - 1; i++) { const [x, y] = pts[i], [X, Y] = pts[i + 1], n = Math.max(1, Math.round(Math.hypot(X - x, Y - y) / 3));
  for (let k = 0; k < n; k++) r.push([x + (X - x) * k / n + (hash(i * 31 + k, 7) - .5) * 1.300, y + (Y - y) * k / n + (hash(i * 31 + k, 9) - .5) * 1.300]); } r.push(pts[pts.length - 1]); return r; };
const shore = rough(coast);
g.fillStyle = '#fff'; g.fillRect(0, 0, 648, 542);
g.fillStyle = '#a5cde1'; poly(g, [...west, ...shore, [650, -2], [-2, -2], [-2, 0]]); g.fill();
const m = new OffscreenCanvas(648, 542).getContext('2d');
poly(m, [...shore, ...land.slice(coast.length)]); m.fill();
for (const isle of [at(A, [780,604,812,607,812,614,785,611]), at(A, [715,850,728,850,740,864,730,866])]) { poly(m, isle); m.fill(); }
const mask = m.getImageData(0, 0, 648, 542).data, img = g.getImageData(0, 0, 648, 542), d = img.data;
const ramp = [[4,112,46], [24,132,62], [84,170,100], [150,208,146], [204,235,196], [242,250,238]];
const sum = (list, x, y) => { let s = 0; for (const [a, b, r, k] of list) { const e = ((x - a) ** 2 + (y - b) ** 2) / (r * r); if (e < 5) s += k * Math.exp(-e); } return s; };
for (let y = 0; y < 542; y++) for (let x = 0; x < 648; x++) {
  const o = (y * 648 + x) * 4; if (mask[o + 3] < 128) continue;
  const n1 = noise(x / 4.500, y / 4.500), n2 = noise(x / 2 + 90, y / 2 + 40), n0 = hash(x + 5000, y + 300), n3 = noise(x / 12 + 7, y / 12 + 3);
  let v = .45 * n0 + .3 * (y < 250 ? 1 : .2);
  const c = sum(clouds, x, y) * (.12 + n1 * 1.050 + n2 * .75) + Math.max(0, n3 * .55 + n1 * .45 - .62) * 1.900 * (.3 + n2);
  if (c > .26) v += Math.min(4, (c - .26) * 4.600 + n0 * .8);
  const s = sum(specks, x, y);
  if (s > .03) { const t = n0 * .65 + n2 * .35; if (t < .13 + s * .62) v += .7 + hash(x + 77, y + 11) * 3.300; else if (t < .2 + s * .8) v += .8; }
  v = Math.max(0, Math.min(4.990, v));
  const i = Math.floor(v), f = v - i;
  for (let k = 0; k < 3; k++) d[o + k] = ramp[i][k] * (1 - f) + ramp[i + 1][k] * f;
  d[o + 3] = 255;
}
g.putImageData(img, 0, 0);
g.lineJoin = 'round'; g.strokeStyle = '#56636b'; g.lineWidth = .8;
poly(g, [...west, ...shore], false); g.stroke();
g.setLineDash([3, 4]); g.strokeStyle = '#e9f6e8'; g.lineWidth = .8; g.save(); g.translate(0, .8); poly(g, shore, false); g.stroke(); g.restore(); g.setLineDash([]);
// lake, settlement and river
g.fillStyle = '#fff'; poly(g, at(B, [372,552,390,543,410,538,406,562,388,575,374,570])); g.fill();
g.beginPath(); g.arc(690 + 242 / 3 - 383, 540 + 225 / 3 - 303, 2, 0, 7); g.fill();
g.strokeStyle = '#f4fbf2'; g.lineWidth = 1.250;
smooth(g, at(C, [705,197,684,200,688,214,712,212,718,200,750,202,766,220,768,250,775,300,768,322,755,312,750,290,738,300,728,318,712,298,718,285,700,284,696,300,712,320,720,350,704,355,706,335,690,312,668,318,668,340,692,338,688,368,662,366,668,380,682,390,668,402,672,428,650,440,636,418,648,398,664,404,650,424,660,392,636,388,622,412,650,422,636,436,612,430,608,456,640,450,662,456,655,476,628,480,600,452,588,462,606,480,602,498,580,478,562,508,556,484,528,492,510,520,492,500,484,530,450,554,438,546,462,540,444,512,420,504,404,544,392,520,368,522,388,546,364,552,378,578,366,596,344,588,350,566,322,580,342,586,330,604,300,612,272,622,294,642,304,632,318,648,314,626,282,620,276,610,250,622,214,646,232,658,218,684,200,682,190,650,178,690]));
g.lineWidth = .8; g.globalAlpha = .7; g.setLineDash([3, 3, 1, 2]);
smooth(g, at(C, [525,240,530,270,520,310,500,340])); smooth(g, at(C, [540,530,535,555,518,560]));
smooth(g, at(C, [385,165,388,190,375,215,450,225])); smooth(g, at(C, [90,655,130,658,165,650,150,670,180,668]));
g.setLineDash([2, 4, 1, 3]);
poly(g, at(C, [780,300,800,325,835,340,848,360,842,385,860,410,900,445,925,450,940,485,970,490]), false); g.stroke();
poly(g, at(C, [870,360,882,380,880,410,900,430,930,450,965,465,985,490,1010,510]), false); g.stroke();
poly(g, at(C, [705,815,720,840,735,850,750,878,790,880]), false); g.stroke();
poly(g, at(C, [700,700,725,698,745,712,775,735,780,755]), false); g.stroke();
g.setLineDash([]); g.globalAlpha = 1;
g.strokeStyle = '#3c3c3c'; g.lineWidth = .9;
poly(g, at(B, [69,780,78,784,72,772,88,768,96,782,104,778,93,763,110,768,114,778,130,774,140,763,154,770,158,788,166,790,182,784,184,772,174,774,178,786,192,790,194,818,205,820,215,815,232,820,250,830,262,834,278,842,290,834,284,830,306,832,325,825,330,812,318,808,308,796,310,782,322,770,345,760,352,764,368,762,360,744,350,740,346,728,322,722,320,695,312,690,318,665,326,662,322,640,334,630,346,624,352,628,356,605,348,588,330,585,328,572,336,560,345,566,360,562,368,570]), false); g.stroke();
poly(g, at(A, [302,858,308,848,316,850,318,838,326,838]), false); g.stroke();
</script>
</body>
</html>
